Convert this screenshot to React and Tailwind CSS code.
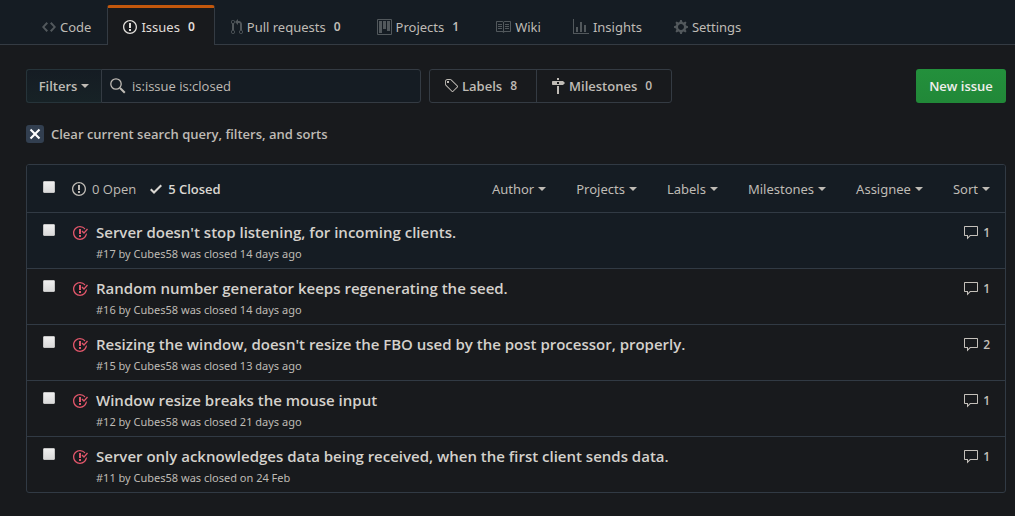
import React from "react";

const ICONS = {
  code: [14, "M9.5 3L8 4.5 11.5 8 8 11.5 9.5 13 14 8 9.5 3zm-5 0L0 8l4.5 5L6 11.5 2.5 8 6 4.5 4.5 3z"],
  opened: [14, "M7 2.3c3.14 0 5.7 2.56 5.7 5.7s-2.56 5.7-5.7 5.7A5.71 5.71 0 0 1 1.3 8c0-3.14 2.56-5.7 5.7-5.7zM7 1C3.14 1 0 4.14 0 8s3.14 7 7 7 7-3.14 7-7-3.14-7-7-7zm1 3H6v5h2V4zm0 6H6v2h2v-2z"],
  pull: [12, "M11 11.28V5c-.03-.78-.34-1.47-.94-2.06C9.46 2.35 8.78 2.03 8 2H7V0L4 3l3 3V4h1c.27.02.48.11.69.31.21.2.3.42.31.69v6.28A1.993 1.993 0 0 0 10 15a1.993 1.993 0 0 0 1-3.72zm-1 2.92c-.66 0-1.2-.55-1.2-1.2 0-.65.55-1.2 1.2-1.2.65 0 1.2.55 1.2 1.2 0 .65-.55 1.2-1.2 1.2zM4 3c0-1.11-.89-2-2-2a1.993 1.993 0 0 0-1 3.72v6.56A1.993 1.993 0 0 0 2 15a1.993 1.993 0 0 0 1-3.72V4.72c.59-.34 1-.98 1-1.72zm-.8 10c0 .66-.55 1.2-1.2 1.2-.65 0-1.2-.55-1.2-1.2 0-.65.55-1.2 1.2-1.2.65 0 1.2.55 1.2 1.2zM2 4.2C1.34 4.2.8 3.65.8 3c0-.65.55-1.2 1.2-1.2.65 0 1.2.55 1.2 1.2 0 .65-.55 1.2-1.2 1.2z"],
  project: [15, "M10 12h3V2h-3v10zm-4-2h3V2H6v8zm-4 4h3V2H2v12zm-1 1h13V1H1v14zM14 0H1a1 1 0 0 0-1 1v14a1 1 0 0 0 1 1h13a1 1 0 0 0 1-1V1a1 1 0 0 0-1-1z"],
  book: [16, "M3 5h4v1H3V5zm0 3h4V7H3v1zm0 2h4V9H3v1zm11-5h-4v1h4V5zm0 2h-4v1h4V7zm0 2h-4v1h4V9zm2-6v9c0 .55-.45 1-1 1H9.5l-1 1-1-1H2c-.55 0-1-.45-1-1V3c0-.55.45-1 1-1h5.5l1 1 1-1H15c.55 0 1 .45 1 1zm-8 .5L7.5 3H2v9h6V3.5zm7-.5H9.5l-.5.5V12h6V3z"],
  graph: [16, "M16 14v1H0V0h1v14h15zM5 13H3V8h2v5zm4 0H7V3h2v10zm4 0h-2V6h2v7z"],
  gear: [14, "M14 8.77v-1.6l-1.94-.64-.45-1.09.88-1.84-1.13-1.13-1.81.91-1.09-.45-.69-1.92h-1.6l-.63 1.94-1.11.45-1.84-.88-1.13 1.13.91 1.81-.45 1.09L0 7.23v1.59l1.94.64.45 1.09-.88 1.84 1.13 1.13 1.81-.91 1.09.45.69 1.92h1.59l.63-1.94 1.11-.45 1.84.88 1.13-1.13-.92-1.81.47-1.09L14 8.75v.02zM7 11c-1.66 0-3-1.34-3-3s1.34-3 3-3 3 1.34 3 3-1.34 3-3 3z"],
  tag: [14, "M7.73 1.73C7.26 1.26 6.62 1 5.96 1H3.5C2.13 1 1 2.13 1 3.5v2.47c0 .66.27 1.3.73 1.77l6.06 6.06c.39.39 1.02.39 1.41 0l4.59-4.59a.996.996 0 0 0 0-1.41L7.73 1.73zM2.38 7.09c-.31-.3-.47-.7-.47-1.13V3.5c0-.88.72-1.59 1.59-1.59h2.47c.42 0 .83.16 1.13.47l6.14 6.13-4.73 4.73-6.13-6.15zM3.01 3h2v2H3V3h.01z"],
  milestone: [14, "M8 2H6V0h2v2zm4 5H2c-.55 0-1-.45-1-1V4c0-.55.45-1 1-1h10l2 2-2 2zM8 4H6v2h2V4zM6 16h2V8H6v8z"],
  check: [12, "M12 5l-8 8-4-4 1.5-1.5L4 10l6.5-6.5L12 5z"],
  closed: [16, "M7 10h2v2H7v-2zm2-6H7v5h2V4zm1.5 1.5l-1 1L12 9l4-4.5-1-1L12 7l-1.5-1.5zM8 13.7A5.71 5.71 0 0 1 2.3 8c0-3.14 2.56-5.7 5.7-5.7 1.83 0 3.45.88 4.5 2.2l.92-.92A6.947 6.947 0 0 0 8 1C4.14 1 1 4.14 1 8s3.14 7 7 7 7-3.14 7-7l-1.52 1.52c-.66 2.41-2.86 4.19-5.48 4.19v-.01z"],
  comment: [16, "M14 1H2c-.55 0-1 .45-1 1v8c0 .55.45 1 1 1h2v3.5L7.5 11H14c.55 0 1-.45 1-1V2c0-.55-.45-1-1-1zm0 9H7l-2 2v-2H2V2h12v8z"],
  x: [12, "M7.48 8l3.75 3.75-1.48 1.48L6 9.48l-3.75 3.75-1.48-1.48L4.52 8 .77 4.25l1.48-1.48L6 6.52l3.75-3.75 1.48 1.48L7.48 8z"],
};

function Icon({ name, className = "" }) {
  const [width, d] = ICONS[name];
  return (
    <svg width={width} height="16" viewBox={`0 0 ${width} 16`} fill="currentColor" aria-hidden="true" className={`shrink-0 ${className}`}>
      <path fillRule="evenodd" d={d} />
    </svg>
  );
}

function Caret() {
  return (
    <svg width="8" height="4" viewBox="0 0 8 4" fill="currentColor" aria-hidden="true" className="shrink-0">
      <path d="M0 0h8L4 4z" />
    </svg>
  );
}

function Checkbox({ label, className = "" }) {
  return (
    <input
      type="checkbox"
      aria-label={label}
      className={`size-3 shrink-0 appearance-none rounded-[1px] border border-[#c4c4c4] bg-linear-to-b from-[#efefef] to-[#dadada] checked:to-[#6b9be0] ${className}`}
    />
  );
}

const TABS = [
  { icon: "code", label: "Code" },
  { icon: "opened", label: "Issues", count: 0, active: true },
  { icon: "pull", label: "Pull requests", count: 0 },
  { icon: "project", label: "Projects", count: 1 },
  { icon: "book", label: "Wiki" },
  { icon: "graph", label: "Insights" },
  { icon: "gear", label: "Settings" },
];

const MENUS = ["Author", "Projects", "Labels", "Milestones", "Assignee", "Sort"];

const ISSUES = [
  { id: 17, title: "Server doesn't stop listening, for incoming clients.", when: "14 days ago", comments: 1, focused: true },
  { id: 16, title: "Random number generator keeps regenerating the seed.", when: "14 days ago", comments: 1 },
  { id: 15, title: "Resizing the window, doesn't resize the FBO used by the post processor, properly.", when: "13 days ago", comments: 2 },
  { id: 12, title: "Window resize breaks the mouse input", when: "21 days ago", comments: 1 },
  { id: 11, title: "Server only acknowledges data being received, when the first client sends data.", when: "on 24 Feb", comments: 1 },
];

function Tab({ icon, label, count, active }) {
  return (
    <a
      href="#"
      aria-current={active ? "page" : undefined}
      className={`flex h-10 items-center gap-1 rounded-t-[3px] border-x border-t-3 px-[15px] ${
        active
          ? "border-x-[#343b43] border-t-[#c2570c] bg-[#181a1d] text-[#e0ddd9]"
          : "border-transparent text-[#bfbbb5]"
      }`}
    >
      <Icon name={icon} className={active ? "" : "text-[#52585c]"} />
      <span>{label}</span>
      {count !== undefined && <span className="px-1 text-xs font-semibold">{count}</span>}
    </a>
  );
}

function IssueRow({ issue }) {
  return (
    <li className={`flex h-14 items-start border-t border-[#313a44] pt-2 pr-[15px] pl-4 ${issue.focused ? "bg-[#151c23]" : ""}`}>
      <Checkbox label={`Select issue ${issue.id}`} className="mt-[3px]" />
      <Icon name="closed" className="mt-1 ml-[17px] text-[#e0566a]" />
      <div className="ml-2 min-w-0 flex-1">
        <a href="#" className="block text-[15px] leading-[22px] font-semibold text-[#d4d1cc]">{issue.title}</a>
        <p className="mt-[3px] font-['Noto_Sans','Open_Sans',sans-serif] text-[11px] leading-4 text-[#bfbbb5]">
          #{issue.id} by <a href="#">Cubes58</a> was closed {issue.when}
        </p>
      </div>
      <a href="#" className="mt-1 flex items-center gap-1 text-xs leading-4 font-semibold text-[#c4c0ba]">
        <Icon name="comment" />
        {issue.comments}
      </a>
    </li>
  );
}

export default function App() {
  return (
    <div className="min-h-screen bg-[#181a1d] font-['Open_Sans','Noto_Sans',sans-serif] text-[13px] leading-5 text-[#bfbbb5]">
      <header className="border-b border-[#343b43] bg-[#151c23] pt-[5px] pr-[9px] pl-[26px] font-['Noto_Sans','Open_Sans',sans-serif]">
        <nav aria-label="Repository" className="-mb-px flex">
          {TABS.map((tab) => (
            <Tab key={tab.label} {...tab} />
          ))}
        </nav>
      </header>

      <main className="pt-6 pr-[9px] pb-[22px] pl-[26px]">
        <div className="flex h-[34px] items-stretch">
          <button type="button" className="flex w-[75px] items-center justify-center gap-1 rounded-l-[3px] border border-r-0 border-[#26343a] bg-linear-to-b from-[#151c23] to-[#172226] font-semibold">
            Filters
            <Caret />
          </button>
          <label className="flex w-80 items-center gap-[6px] rounded-r-[3px] border border-[#343b43] bg-[#151c23] px-2">
            <svg width="16" height="16" viewBox="0 0 16 16" fill="none" stroke="currentColor" aria-hidden="true" className="shrink-0">
              <circle cx="6" cy="6" r="5.2" strokeWidth="1.3" />
              <path d="M10 10l4.8 4.8" strokeWidth="2" />
            </svg>
            <input type="text" aria-label="Search all issues" defaultValue="is:issue is:closed" className="min-w-0 flex-1 bg-transparent outline-none" />
          </label>
          <nav aria-label="Issue metadata" className="ml-2 flex divide-x divide-[#343b43] rounded-[3px] border border-[#343b43] font-semibold">
            <a href="#" className="flex items-center gap-1 pr-[15px] pl-[14px]">
              <Icon name="tag" />
              Labels
              <span className="px-1 text-xs">8</span>
            </a>
            <a href="#" className="flex items-center gap-1 pr-[15px] pl-[14px]">
              <Icon name="milestone" />
              Milestones
              <span className="px-1 text-xs">0</span>
            </a>
          </nav>
          <button type="button" className="ml-auto w-[90px] rounded-[3px] bg-linear-to-b from-[#23903c] to-[#218838] font-semibold text-[#f0efed]">
            New issue
          </button>
        </div>

        <a href="#" className="mt-[21px] flex items-center gap-[7px] font-semibold">
          <span className="flex size-[18px] items-center justify-center rounded-[3px] bg-[#323f50] text-white">
            <Icon name="x" />
          </span>
          Clear current search query, filters, and sorts
        </a>

        <section className="mt-5 overflow-hidden rounded-[3px] border border-[#313a44]">
          <div className="flex h-[47px] items-center bg-[#151c23] pr-[15px] pl-4">
            <Checkbox label="Select all issues" className="-mt-1" />
            <a href="#" className="ml-[17px] flex items-center gap-[6px]">
              <Icon name="opened" />
              0 Open
            </a>
            <a href="#" className="ml-[14px] flex items-center gap-[6px] font-semibold text-[#dad7d2]">
              <Icon name="check" />
              5 Closed
            </a>
            <div className="ml-auto flex gap-[30px] font-['Noto_Sans','Open_Sans',sans-serif]">
              {MENUS.map((menu) => (
                <button key={menu} type="button" className="flex items-center gap-1">
                  {menu}
                  <Caret />
                </button>
              ))}
            </div>
          </div>
          <ul>
            {ISSUES.map((issue) => (
              <IssueRow key={issue.id} issue={issue} />
            ))}
          </ul>
        </section>
      </main>
    </div>
  );
}
